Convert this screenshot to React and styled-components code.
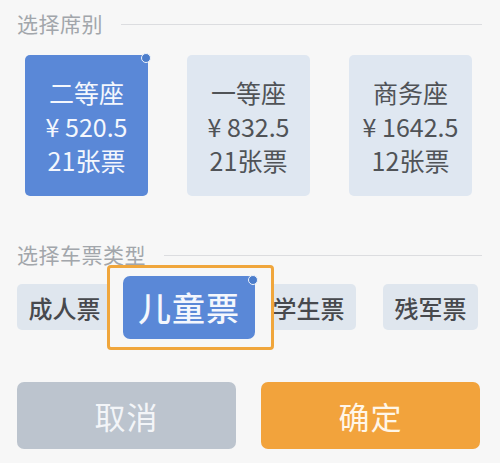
import React from "react"
import styled, { createGlobalStyle } from "styled-components"

const GlobalStyle = createGlobalStyle`
  html, body {
    margin: 0;
    padding: 0;
    background: #f7f7f7;
  }
  body {
    font-family: "Noto Sans CJK SC", "Noto Sans", sans-serif;
  }
`

const seats = [
  { name: "二等座", price: "520.5", count: 21 },
  { name: "一等座", price: "832.5", count: 21 },
  { name: "商务座", price: "1642.5", count: 12 },
]

const ticketTypes = ["成人票", "儿童票", "学生票", "残军票"]

const App = () => {
  const selectedSeat = 0
  const selectedType = 1

  return (
    <>
      <GlobalStyle />
      <Panel>
        <SectionHeader>
          <SectionTitle>选择席别</SectionTitle>
          <Rule />
        </SectionHeader>
        <SeatRow>
          {seats.map((seat, i) => (
            <SeatCard key={seat.name} $active={i === selectedSeat}>
              {i === selectedSeat && <Dot />}
              <SeatLine>{seat.name}</SeatLine>
              <SeatLine>¥ {seat.price}</SeatLine>
              <SeatLine>{seat.count}张票</SeatLine>
            </SeatCard>
          ))}
        </SeatRow>

        <SectionHeader $spaced>
          <SectionTitle>选择车票类型</SectionTitle>
          <Rule />
        </SectionHeader>
        <TypeRow>
          {ticketTypes.map((type, i) =>
            i === selectedType ? (
              <FocusFrame key={type}>
                <Chip $active>
                  <Dot $inset />
                  {type}
                </Chip>
              </FocusFrame>
            ) : (
              <Chip key={type}>{type}</Chip>
            )
          )}
        </TypeRow>

        <ButtonRow>
          <ActionButton>取消</ActionButton>
          <ActionButton $primary>确定</ActionButton>
        </ButtonRow>
      </Panel>
    </>
  )
}

export default App

const Panel = styled.div`
  width: 500px;
  height: 463px;
  box-sizing: border-box;
  padding: 8px 18px 0 17px;
  background: #f7f7f7;
  overflow: hidden;
`

const SectionHeader = styled.div`
  display: flex;
  align-items: center;
  gap: 18px;
  height: 30px;
  margin-top: ${props => (props.$spaced ? "43px" : "0")};
`

const SectionTitle = styled.span`
  font-size: 21px;
  line-height: 30px;
  color: #a2a6ab;
  letter-spacing: 0.5px;
`

const Rule = styled.div`
  flex: 1;
  height: 1px;
  margin-top: 2px;
  background: #dcdde0;
`

const SeatRow = styled.div`
  display: flex;
  gap: 39px;
  margin-top: 17px;
  padding-left: 8px;
`

const SeatCard = styled.div`
  position: relative;
  width: 123px;
  height: 141px;
  box-sizing: border-box;
  border-radius: 5px;
  display: flex;
  flex-direction: column;
  align-items: center;
  justify-content: center;
  background: ${props => (props.$active ? "#5a88d7" : "#dfe7f1")};
  color: ${props => (props.$active ? "#f4f7fd" : "#505357")};
`

const SeatLine = styled.div`
  font-size: 25px;
  line-height: 34px;
  white-space: nowrap;
`

const Dot = styled.span`
  position: absolute;
  top: ${props => (props.$inset ? "-1px" : "-2px")};
  right: ${props => (props.$inset ? "-3px" : "-3px")};
  width: 8px;
  height: 8px;
  border-radius: 50%;
  background: #4c7dcb;
  border: 1.5px solid #eef3fb;
`

const TypeRow = styled.div`
  display: flex;
  align-items: center;
  gap: 27px;
  margin-top: 15px;
  height: 46px;
`

const Chip = styled.div`
  position: relative;
  flex: none;
  display: flex;
  align-items: center;
  justify-content: center;
  box-sizing: border-box;
  width: ${props => (props.$active ? "132px" : "95px")};
  height: ${props => (props.$active ? "63px" : "46px")};
  border-radius: ${props => (props.$active ? "7px" : "5px")};
  background: ${props => (props.$active ? "#5a88d7" : "#dfe6ee")};
  color: ${props => (props.$active ? "#f4f7fd" : "#47494d")};
  font-size: ${props => (props.$active ? "33px" : "24px")};
  font-weight: 500;
  letter-spacing: ${props => (props.$active ? "1px" : "0")};
`

const FocusFrame = styled.div`
  position: relative;
  z-index: 1;
  flex: none;
  margin: -19px -40px -19px -32px;
  padding: 8px 16px 8px 13px;
  border: 3px solid #f0a63c;
  border-radius: 4px;
  background: #f7f7f7;
`

const ButtonRow = styled.div`
  display: flex;
  gap: 25px;
  margin-top: 52px;
`

const ActionButton = styled.button`
  flex: none;
  width: 219px;
  height: 67px;
  border: none;
  border-radius: 7px;
  font-family: "Noto Sans CJK SC", "Noto Sans", sans-serif;
  font-size: 31px;
  letter-spacing: 1px;
  background: ${props => (props.$primary ? "#f2a33c" : "#bcc4ce")};
  color: ${props => (props.$primary ? "#fff6e8" : "#f3f5f8")};
`
